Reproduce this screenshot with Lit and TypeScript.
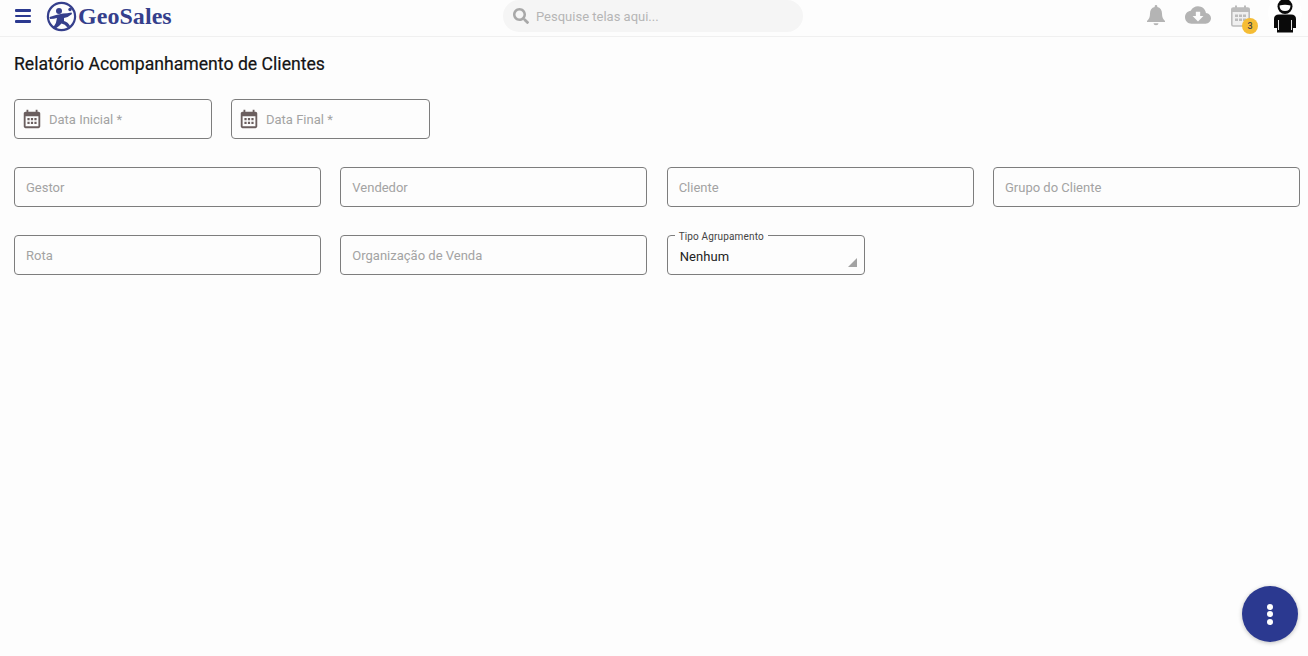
import { LitElement, html, css } from "lit";
import { customElement } from "lit/decorators.js";

const calendar = html`<svg class="cal" viewBox="0 0 24 24"><path d="M19 4h-1V2h-2v2H8V2H6v2H5c-1.100 0-2 .9-2 2v14c0 1.100.9 2 2 2h14c1.100 0 2-.9 2-2V6c0-1.100-.9-2-2-2zm0 16H5V9h14v11z"/><path d="M7 11h2.400v2.400H7zM10.800 11h2.400v2.400h-2.400zM14.600 11H17v2.400h-2.400zM7 15h2.400v2.400H7zM10.800 15h2.400v2.400h-2.400zM14.600 15H17v2.400h-2.400z"/></svg>`;

@customElement("app-root")
export class AppRoot extends LitElement {
  static styles = css`
    :host { display: block; height: 656px; background: #fdfdfd; font-family: Roboto, "Liberation Sans", sans-serif; overflow: hidden; position: relative; }
    header { height: 36px; border-bottom: 1px solid #f0f0f0; display: flex; align-items: flex-start; box-sizing: content-box; }
    .left { width: 503px; display: flex; align-items: center; padding: 1px 0 0 15px; box-sizing: border-box; height: 31px; flex: none; }
    .menu { width: 16px; height: 14px; display: flex; flex-direction: column; justify-content: space-between; margin-right: 15px; }
    .menu i { display: block; height: 2.7px; background: #2b3990; border-radius: 1px; }
    .logo { width: 31px; height: 31px; margin-right: 1px; flex: none; }
    .brand { font: bold 24px "Liberation Serif", serif; color: #353f8c; letter-spacing: 0.05px; }
    .search { width: 300px; height: 32px; flex: none; background: #f5f5f5; border-radius: 16px; display: flex; align-items: center; padding-left: 10px; box-sizing: border-box; gap: 7px; color: #b5b5b5; font-size: 13px; }
    .search svg { width: 16px; height: 16px; fill: #a8a8a8; }
    .right { flex: 1; display: flex; justify-content: flex-end; align-items: flex-start; padding-right: 6px; }
    .bell { width: 20px; height: 22px; fill: #b4b4b4; margin: 4px 19px 0 0; }
    .cloud { width: 26px; height: 26px; fill: #b4b4b4; margin: 2px 20px 0 0; }
    .calwrap { position: relative; width: 19px; height: 22px; margin: 5px 18px 0 0; }
    .calwrap svg { width: 19px; height: 22px; display: block; }
    .badge { position: absolute; left: 11px; top: 13px; width: 16px; height: 16px; border-radius: 50%; background: #f5bd35; color: #444; font-size: 9px; font-weight: 500; display: flex; align-items: center; justify-content: center; }
    .avatar { width: 34px; height: 34px; flex: none; }
    main { padding: 0 8px 0 14px; }
    h1 { margin: 0; padding-top: 17px; height: 47px; box-sizing: border-box; font-size: 17.65px; font-weight: 400; line-height: 21px; color: #141414; -webkit-text-stroke: 0.2px #141414; }
    .form { margin-top: 15px; display: flex; flex-direction: column; gap: 28px; }
    .row { display: grid; grid-template-columns: repeat(4, 307px); column-gap: 19.33px; }
    .dates { display: flex; gap: 19px; }
    .field { height: 40px; box-sizing: border-box; border: 1px solid #7d7d7d; border-radius: 4px; display: flex; align-items: center; padding-left: 11px; color: #a3a3a3; font-size: 13px; }
    .date { padding-left: 6px; gap: 6px; width: 198px; }
    .date + .date { width: 199px; }
    .cal { width: 22px; height: 22px; fill: #6b5f5f; flex: none; }
    .select { width: 198px; position: relative; color: #222; padding: 2px 0 0 12px; letter-spacing: 0.1px; }
    .select span { position: absolute; left: 7px; top: -5px; padding: 0 4px; background: #fdfdfd; font-size: 10px; line-height: 11px; color: #444; letter-spacing: 0.15px; }
    .select::after { content: ""; position: absolute; right: 7px; bottom: 7px; border-style: solid; border-width: 0 0 9px 9px; border-color: transparent transparent #a3a3a3 transparent; }
    .fab { position: absolute; left: 1242px; top: 586px; width: 56px; height: 56px; border-radius: 50%; background: #2b3990; box-shadow: 0 1px 4px rgba(0,0,0,.25); display: flex; flex-direction: column; align-items: center; justify-content: center; gap: 1.5px; }
    .fab i { width: 6px; height: 6px; border-radius: 50%; background: #fff; }
  `;

  render() {
    return html`
      <header>
        <div class="left">
          <div class="menu"><i></i><i></i><i></i></div>
          <svg class="logo" viewBox="0 0 31 31">
            <circle cx="15.500" cy="15.500" r="13.600" fill="none" stroke="#353f8c" stroke-width="2.200"/>
            <circle cx="13" cy="10" r="3" fill="#353f8c"/>
            <circle cx="24" cy="8.500" r="1.700" fill="#353f8c"/>
            <path d="M3.500 16 Q7 15 10 14 L17 12.500 Q21 12.500 25.500 11.500 L26 13 Q22 16.500 18 17 L18 20 Q22 21 24 25 L21.500 26.500 Q19 23 15.500 22.500 Q13 25.500 9 28 L7.500 26 Q10.500 22.500 11 17 Q8 18 4 18 Z" fill="#353f8c"/>
          </svg>
          <span class="brand">GeoSales</span>
        </div>
        <div class="search">
          <svg viewBox="0 0 512 512"><path d="M505 442.700L405.300 343c-4.500-4.500-10.600-7-17-7H372c27.600-35.300 44-79.700 44-128C416 93.100 322.900 0 208 0S0 93.100 0 208s93.100 208 208 208c48.300 0 92.700-16.400 128-44v16.300c0 6.400 2.500 12.500 7 17l99.700 99.700c9.400 9.400 24.600 9.400 33.900 0l28.300-28.300c9.400-9.400 9.400-24.600.1-34zM208 336c-70.700 0-128-57.200-128-128 0-70.700 57.200-128 128-128 70.700 0 128 57.200 128 128 0 70.700-57.200 128-128 128z"/></svg>
          Pesquise telas aqui...
        </div>
        <div class="right">
          <svg class="bell" viewBox="0 0 20 22"><path d="M10 1a1.300 1.300 0 0 1 1.300 1.300v.8C14.500 3.800 16 6.500 16 9.500c0 4 1 5.500 3 7.500v1H1v-1c2-2 3-3.500 3-7.500C4 6.500 5.500 3.800 8.700 3.100v-.8A1.300 1.300 0 0 1 10 1z"/><path d="M7.500 19.300h5a2.500 2 0 0 1-5 0z"/></svg>
          <svg class="cloud" viewBox="0 0 24 24"><path d="M19.350 10.040C18.670 6.590 15.640 4 12 4 9.110 4 6.600 5.640 5.350 8.040 2.340 8.360 0 10.910 0 14c0 3.310 2.690 6 6 6h13c2.760 0 5-2.240 5-5 0-2.640-2.050-4.780-4.650-4.960zM17 13l-5 5-5-5h3V9h4v4h3z"/></svg>
          <div class="calwrap">
            <svg viewBox="0 0 19 22">
              <rect x="0.800" y="3" width="17.400" height="18" rx="1.500" fill="#f0f0f0" stroke="#bcbcbc" stroke-width="1.600"/>
              <rect x="0.800" y="3" width="17.400" height="4" fill="#bcbcbc"/>
              <rect x="4" y="0.500" width="2" height="4" fill="#bcbcbc"/>
              <rect x="13" y="0.500" width="2" height="4" fill="#bcbcbc"/>
              <path d="M4 9.500h3v2.500H4zM8 9.500h3v2.500H8zM12 9.500h3v2.500h-3zM4 13.500h3v2.500H4zM8 13.500h3v2.500H8zM12 13.500h3v2.500h-3z" fill="#bcbcbc"/>
            </svg>
            <span class="badge">3</span>
          </div>
          <svg class="avatar" viewBox="0 0 34 34">
            <circle cx="17" cy="13" r="17" fill="#fff"/>
            <circle cx="17" cy="6.500" r="7.500" fill="#0a0a0a"/>
            <path d="M11.500 5.500 Q17 3.800 22.500 5.500 Q22.300 11 17 11 Q11.700 11 11.500 5.500Z" fill="#fff"/>
            <path d="M6 19 Q6 14.500 11 14.500 H23 Q28 14.500 28 19 V28 H25 V32.500 H9 V28 H6 Z" fill="#0a0a0a"/>
            <path d="M10.500 20 V30 M23.500 20 V30" stroke="#fff" stroke-width="0.900" fill="none"/>
          </svg>
        </div>
      </header>
      <main>
        <h1>Relatório Acompanhamento de Clientes</h1>
        <div class="form">
          <div class="dates">
            <div class="field date">${calendar}Data Inicial *</div>
            <div class="field date">${calendar}Data Final *</div>
          </div>
          <div class="row">
            <div class="field">Gestor</div>
            <div class="field">Vendedor</div>
            <div class="field">Cliente</div>
            <div class="field">Grupo do Cliente</div>
          </div>
          <div class="row">
            <div class="field">Rota</div>
            <div class="field">Organização de Venda</div>
            <div class="field select"><span>Tipo Agrupamento</span>Nenhum</div>
          </div>
        </div>
      </main>
      <div class="fab"><i></i><i></i><i></i></div>
    `;
  }
}
